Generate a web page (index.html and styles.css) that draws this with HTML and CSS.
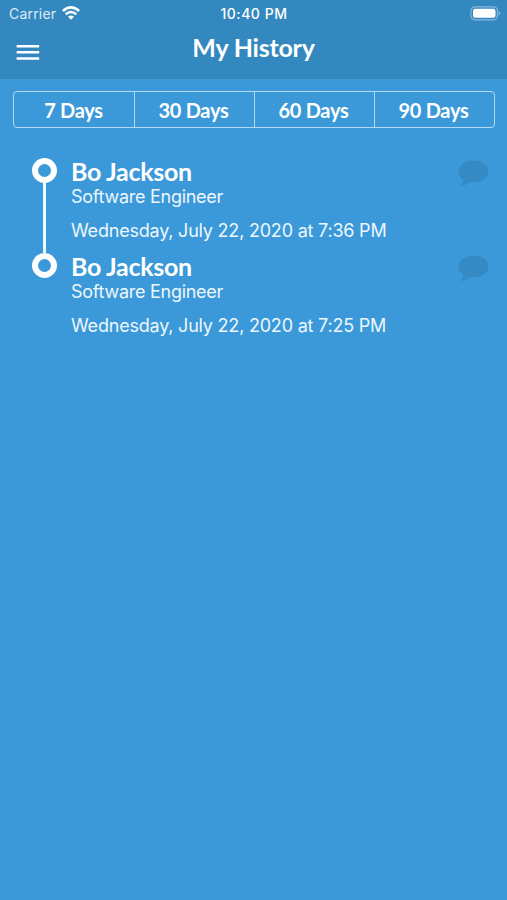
FILE: index.html
```html
<!DOCTYPE html>
<html lang="en">
<head>
<meta charset="utf-8">
<title>My History</title>
<link rel="stylesheet" href="styles.css">
</head>
<body>
<header class="header">
  <div class="status">
    <div class="carrier"><span>Carrier</span>
      <svg class="wifi" width="18" height="14" viewBox="0 0 18 14" fill="none" stroke="#fff" stroke-width="2.6"><path d="M.9 5Q9-2.200 17.100 5M3.700 8.200Q9 3.800 14.300 8.200"/><path d="M6 10.700Q9 8.300 12 10.700L9 13.700Z" fill="#fff" stroke="none"/></svg>
    </div>
    <time class="clock">10:40 PM</time>
    <svg class="battery" width="32" height="15" viewBox="0 0 32 15"><rect x="1" y=".8" width="26.5" height="13" rx="4" fill="none" stroke="#85b8dc" stroke-width="1.2"/><rect x="3" y="2.8" width="22.5" height="9" rx="2.2" fill="#fff"/><path d="M28.7 5.2q3.2 2.1 0 4.2z" fill="#85b8dc"/></svg>
  </div>
  <div class="nav">
    <button class="menu" aria-label="Menu"><svg width="24" height="17" viewBox="0 0 24 17" stroke="#fff" stroke-width="2.5"><path d="M.6 2.200H23.200M.6 8.300H23.200M.6 14.400H23.200"/></svg></button>
    <h1 class="title">My History</h1>
  </div>
</header>
<main>
  <nav class="ranges"><button>7 Days</button><button>30 Days</button><button>60 Days</button><button>90 Days</button></nav>
  <ol class="timeline">
    <li class="entry">
      <div class="marker"></div>
      <div class="info"><h2>Bo Jackson</h2><p class="role">Software Engineer</p><p class="date">Wednesday, July 22, 2020 at 7:36 PM</p></div>
      <svg class="bubble" width="31" height="28" viewBox="0 0 31 28"><path d="M15.500.5C24 .5 30.500 5.200 30.500 11.500S24 22.300 15.500 22.300Q13.500 22.300 11.500 22Q8 25.500 2.500 26.600Q5.300 23.500 5 19.700Q.5 16.500.5 11.500C.5 5.200 7 .5 15.500.5Z"/></svg>
    </li>
    <li class="entry">
      <div class="marker"></div>
      <div class="info"><h2>Bo Jackson</h2><p class="role">Software Engineer</p><p class="date">Wednesday, July 22, 2020 at 7:25 PM</p></div>
      <svg class="bubble" width="31" height="28" viewBox="0 0 31 28"><path d="M15.500.5C24 .5 30.500 5.200 30.500 11.500S24 22.300 15.500 22.300Q13.500 22.300 11.500 22Q8 25.500 2.500 26.600Q5.300 23.500 5 19.700Q.5 16.500.5 11.500C.5 5.200 7 .5 15.500.5Z"/></svg>
    </li>
  </ol>
</main>
</body>
</html>
```
FILE: styles.css
```css
*, *::before, *::after { box-sizing: border-box; }
body { margin: 0; min-height: 100vh; background: #3b99d9; color: #fff; font-family: Inter, sans-serif; }
h1, h2, p, ol { margin: 0; padding: 0; }
button { margin: 0; padding: 0; border: 0; background: none; color: inherit; }
.header { height: 79px; background: #3488c0; }
.status { display: grid; grid-template-columns: 1fr auto 1fr; height: 28px; padding: 0 5px 0 9px; align-items: center; font-size: 14px; line-height: 28px; }
.carrier { display: flex; align-items: center; gap: 6px; color: #dcebf6; letter-spacing: .2px; }
.wifi { margin-top: -2px; }
.clock { font-weight: 500; letter-spacing: .55px; margin-right: 3px; }
.battery { justify-self: end; margin-top: -2px; }
.nav { display: grid; grid-template-columns: 40px 1fr 40px; height: 51px; padding: 0 16px; }
.menu { display: flex; padding-top: 16px; }
.title { font: 700 25px/38px Lato, sans-serif; letter-spacing: -.2px; text-align: center; }
.ranges { display: grid; grid-template-columns: repeat(4, 1fr); height: 37px; margin: 12px 12px 0 13px; border: 1px solid #b3d8f0; border-radius: 4px; }
.ranges button { padding: 1px 1px 0 0; font: 700 20px/34px Lato, sans-serif; letter-spacing: -.3px; }
.ranges button + button { border-left: 1px solid #b3d8f0; padding-right: 2px; }
.timeline { margin: 28px 18px 0 32px; list-style: none; }
.entry { display: grid; grid-template-columns: 39px 1fr 31px; height: 95.300px; }
.marker { display: flex; flex-direction: column; align-items: center; width: 25px; margin-top: 2px; margin-bottom: -2px; }
.marker::before { content: ""; flex: none; width: 25px; height: 25px; border: 6px solid #fff; border-radius: 50%; }
.entry:not(:last-child) .marker::after { content: ""; flex: 1; width: 3px; background: #f0f8fd; }
.info h2 { font: 700 25px/30px Lato, sans-serif; letter-spacing: -.3px; }
.role, .date { font-size: 18px; line-height: 22px; color: #edf7fd; white-space: nowrap; }
.role { letter-spacing: -.27px; }
.date { margin-top: 12px; letter-spacing: -.21px; }
.bubble { margin-top: 3.500px; fill: #358ac4; }
```
